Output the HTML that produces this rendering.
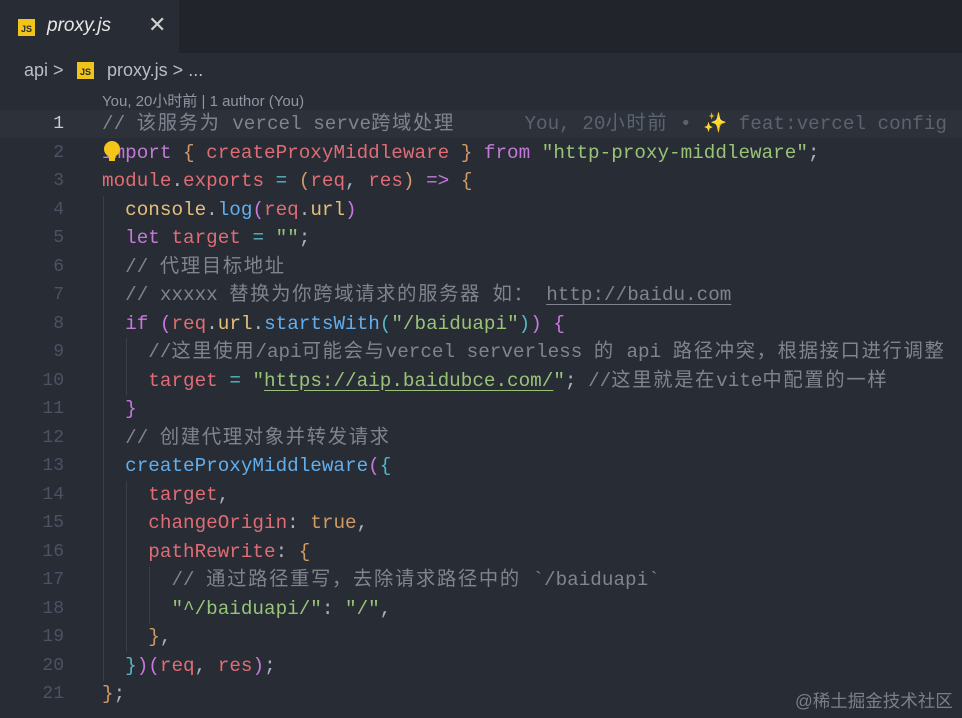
<!DOCTYPE html>
<html><head><meta charset="utf-8"><style>
*{margin:0;padding:0;box-sizing:border-box}
body{width:962px;height:718px;background:#282c34;overflow:hidden;position:relative;font-family:"Liberation Sans","Noto Sans CJK SC",sans-serif}
.tabbar{position:absolute;left:0;top:0;width:962px;height:53px;background:#21252b}
.tab{position:absolute;left:0;top:0;width:179px;height:53px;background:#282c34;border-bottom:1px solid #282c34}
.tab .name{position:absolute;left:47px;top:15px;font-size:19px;font-style:italic;color:#e6e6e6}
.tab .x{position:absolute;left:148px;top:12px;font-size:22px;color:#d0d0d0}
.js{position:absolute;width:17px;height:17px;background:#f0c419;color:#282c34;font-size:9px;font-weight:bold;text-align:center;line-height:21px;font-family:"Liberation Sans",sans-serif}
.bc{position:absolute;top:60px;font-size:18px;color:#b8bdc7}
.blame{position:absolute;left:102px;top:90px;font-size:15px;color:#9097a3}
.hl{position:absolute;left:0;top:110px;width:962px;height:28px;background:#2c313a}
.ln{position:absolute;left:0;width:64px;text-align:right;font-family:"Liberation Mono",monospace;font-size:18px;color:#4b5263;line-height:28.5px}
.code{position:absolute;left:102px;font-family:"Liberation Mono","Noto Sans CJK SC",monospace;font-size:19.3px;line-height:28.5px;white-space:pre;color:#abb2bf}
.z{letter-spacing:1.7px}
.k{color:#c678dd}.v{color:#e06c75}.s{color:#98c379}.f{color:#61afef}.c{color:#7f848e}.o{color:#56b6c2}.y{color:#e5c07b}.n{color:#d19a66}.b{color:#d19a66}.p{color:#c678dd}.t{color:#56b6c2}
.u{text-decoration:underline;text-underline-offset:4px}
.guide{position:absolute;width:1px;background:#3b4048}
.wm{position:absolute;left:795px;top:688px;font-size:17.5px;color:#7a7f88}
</style></head><body>
<div class="tabbar"><div class="tab"><div class="js" style="left:18px;top:19px">JS</div><div class="name">proxy.js</div><div class="x">✕</div></div></div>
<div class="bc" style="left:24px">api &gt;</div>
<div class="js" style="left:77px;top:62px">JS</div>
<div class="bc" style="left:107px">proxy.js &gt; ...</div>
<div class="blame">You, 20小时前 | 1 author (You)</div>
<div class="hl"></div>
<div class="guide" style="left:103px;top:196px;height:485px"></div>
<div class="guide" style="left:126px;top:338px;height:57px"></div>
<div class="guide" style="left:126px;top:481px;height:171px"></div>
<div class="guide" style="left:149px;top:567px;height:57px"></div>
<div style="position:absolute;left:0;top:110px">
<div class="ln" style="top:0;color:#c8ccd4">1</div>
<div class="ln" style="top:28.5px">2</div><div class="ln" style="top:57px">3</div><div class="ln" style="top:85.5px">4</div><div class="ln" style="top:114px">5</div><div class="ln" style="top:142.5px">6</div><div class="ln" style="top:171px">7</div><div class="ln" style="top:199.5px">8</div><div class="ln" style="top:228px">9</div><div class="ln" style="top:256.5px">10</div><div class="ln" style="top:285px">11</div><div class="ln" style="top:313.5px">12</div><div class="ln" style="top:342px">13</div><div class="ln" style="top:370.5px">14</div><div class="ln" style="top:399px">15</div><div class="ln" style="top:427.5px">16</div><div class="ln" style="top:456px">17</div><div class="ln" style="top:484.5px">18</div><div class="ln" style="top:513px">19</div><div class="ln" style="top:541.5px">20</div><div class="ln" style="top:570px">21</div>
</div>
<div class="code" style="top:110px"><span class="c">// <span class="z">该服务为</span> vercel serve<span class="z">跨域处理</span></span>      <span style="color:#5c6370">You, 20<span class="z">小时前</span> • <span style="color:#c9a45c">✨</span> feat:vercel config</span>
<span class="k">import</span> <span class="b">{</span> <span class="v">createProxyMiddleware</span> <span class="b">}</span> <span class="k">from</span> <span class="s">"http-proxy-middleware"</span>;
<span class="v">module</span>.<span class="v">exports</span> <span class="o">=</span> <span class="b">(</span><span class="v">req</span>, <span class="v">res</span><span class="b">)</span> <span class="k">=&gt;</span> <span class="b">{</span>
  <span class="y">console</span>.<span class="f">log</span><span class="p">(</span><span class="v">req</span>.<span class="y">url</span><span class="p">)</span>
  <span class="k">let</span> <span class="v">target</span> <span class="o">=</span> <span class="s">""</span>;
  <span class="c">// <span class="z">代理目标地址</span></span>
  <span class="c">// xxxxx <span class="z">替换为你跨域请求的服务器</span> <span class="z">如：</span> <span class="u">http://baidu.com</span></span>
  <span class="k">if</span> <span class="p">(</span><span class="v">req</span>.<span class="y">url</span>.<span class="f">startsWith</span><span class="t">(</span><span class="s">"/baiduapi"</span><span class="t">)</span><span class="p">)</span> <span class="p">{</span>
    <span class="c">//<span class="z">这里使用</span>/api<span class="z">可能会与</span>vercel serverless <span class="z">的</span> api <span class="z">路径冲突，根据接口进行调整</span></span>
    <span class="v">target</span> <span class="o">=</span> <span class="s">"<span class="u">https://aip.baidubce.com/</span>"</span>; <span class="c">//<span class="z">这里就是在</span>vite<span class="z">中配置的一样</span></span>
  <span class="p">}</span>
  <span class="c">// <span class="z">创建代理对象并转发请求</span></span>
  <span class="f">createProxyMiddleware</span><span class="p">(</span><span class="t">{</span>
    <span class="v">target</span>,
    <span class="v">changeOrigin</span>: <span class="n">true</span>,
    <span class="v">pathRewrite</span>: <span class="b">{</span>
      <span class="c">// <span class="z">通过路径重写，去除请求路径中的</span> `/baiduapi`</span>
      <span class="s">"^/baiduapi/"</span>: <span class="s">"/"</span>,
    <span class="b">}</span>,
  <span class="t">}</span><span class="p">)(</span><span class="v">req</span>, <span class="v">res</span><span class="p">)</span>;
<span class="b">}</span>;</div>
<div style="position:absolute;left:104px;top:141px;width:16px;height:16px;border-radius:50%;background:#f5c518"></div>
<div style="position:absolute;left:109px;top:156px;width:6px;height:5px;background:#f5c518"></div>
<div class="wm">@稀土掘金技术社区</div>
</body></html>
